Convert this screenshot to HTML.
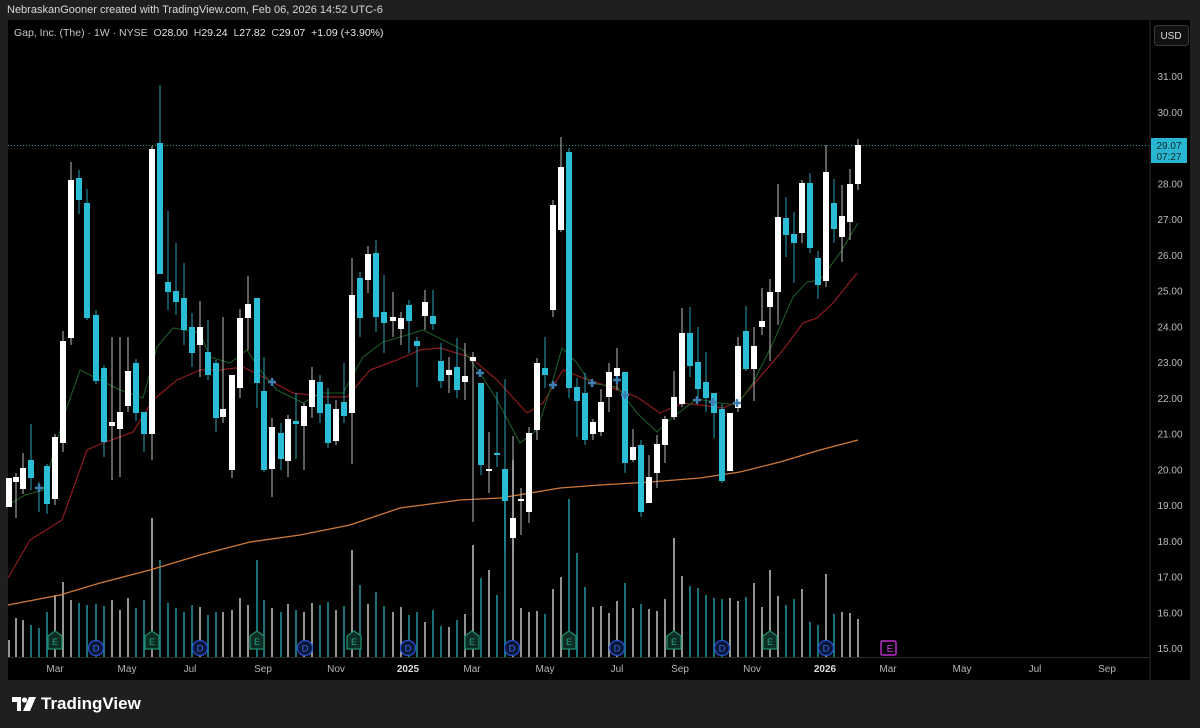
<!DOCTYPE html>
<html><head><meta charset="utf-8">
<style>
html,body{margin:0;padding:0;background:#1f1f1f;width:1200px;height:728px;overflow:hidden;font-family:"Liberation Sans",sans-serif}
#wrap{position:relative;width:1200px;height:728px}
.top{position:absolute;left:7px;top:4px;font-size:11px;color:#d8d8d8}
#chart{position:absolute;left:8px;top:20px;width:1182px;height:660px;background:#000}
.hdr{position:absolute;left:14px;top:27px;font-size:10.5px;color:#c8c8c8;white-space:nowrap}
.hdr b{font-weight:normal;color:#e8e8e8}
.logo{position:absolute;left:12px;top:694px;display:flex;align-items:center;color:#fff;font-weight:bold;font-size:17px}
</style></head><body><div id="wrap">
<div class="top">NebraskanGooner created with TradingView.com, Feb 06, 2026 14:52 UTC-6</div>
<div id="chart"></div>
<svg id="sv" width="1200" height="728" style="position:absolute;left:0;top:0"></svg>
<div class="hdr">Gap, Inc. (The) · 1W · NYSE &nbsp;O<b>28.00</b> &nbsp;H<b>29.24</b> &nbsp;L<b>27.82</b> &nbsp;C<b>29.07</b> &nbsp;<b>+1.09 (+3.90%)</b></div>
<div class="logo"><svg width="24" height="14" viewBox="0 0 24 14" style="margin-right:5px"><path d="M0 0h9v14h-4v-9h-5z" fill="#fff"/><circle cx="12.5" cy="3" r="2.6" fill="#fff"/><path d="M17 0h7l-6 14h-7z" fill="#fff"/></svg>TradingView</div>
</div>
<script>
var C=[
[9,478,507,478,507,'w'],[16,477,482,473,518,'w'],[23,468,489,453,494,'w'],[31,460,478,424,490,'c'],[39,487,489,482,512,'c'],[47,466,504,464,514,'c'],[55,437,499,434,505,'w'],[63,341,443,331,452,'w'],[71,180,338,162,345,'w'],[79,178,200,170,214,'c'],[87,203,318,189,320,'c'],[96,315,381,310,384,'c'],[104,368,442,365,457,'c'],[112,422,426,337,480,'w'],[120,412,429,337,477,'w'],[128,371,406,337,412,'w'],[136,363,413,359,421,'c'],[144,412,434,412,452,'c'],[152,149,434,146,460,'w'],[160,143,274,85,274,'c'],[168,282,292,211,310,'c'],[176,291,302,243,315,'c'],[184,298,330,263,345,'c'],[192,327,353,313,367,'c'],[200,327,345,301,377,'w'],[208,352,375,320,380,'c'],[216,363,418,360,432,'c'],
[223,409,417,317,423,'w'],[232,375,470,375,478,'w'],[240,318,388,309,398,'w'],[248,304,318,276,350,'w'],[257,298,383,298,408,'c'],[264,391,470,357,472,'c'],[272,427,469,418,497,'w'],[281,433,459,423,470,'c'],[288,419,461,415,477,'w'],[296,421,424,393,459,'c'],[304,406,426,403,470,'w'],[312,380,407,367,418,'w'],[320,382,413,375,423,'c'],[328,404,443,388,448,'c'],[336,409,441,400,445,'w'],[344,402,416,363,423,'c'],[352,295,413,258,464,'w'],[360,278,318,272,337,'c'],[368,254,280,246,293,'w'],[376,253,317,240,332,'c'],[384,312,323,275,353,'c'],[393,317,321,292,337,'w'],[401,318,329,312,345,'w'],[409,305,321,300,353,'c'],[417,341,346,337,387,'c'],[425,302,316,290,330,'w'],[433,316,324,290,330,'c'],
[441,361,381,343,388,'c'],[449,370,375,357,393,'w'],[457,367,390,338,398,'c'],[465,376,382,343,400,'w'],[473,357,361,352,522,'w'],[481,383,465,383,475,'c'],[489,469,471,432,493,'w'],[497,453,455,392,467,'c'],[505,469,501,379,550,'c'],[513,518,538,436,550,'w'],[521,499,501,488,535,'w'],[529,433,512,427,523,'w'],[537,363,430,358,440,'w'],[545,368,375,337,388,'c'],[553,205,310,200,317,'w'],[561,167,230,137,232,'w'],[569,152,388,148,398,'c'],[577,387,401,378,437,'c'],[585,393,440,373,445,'c'],[593,422,434,419,440,'w'],[601,402,432,389,436,'w'],[609,372,397,363,412,'w'],[617,368,376,348,390,'w'],[625,372,463,372,473,'c'],[633,447,460,429,462,'w'],[641,445,512,440,517,'c'],[649,477,503,455,503,'w'],
[657,444,473,435,488,'w'],[665,419,445,416,463,'w'],[674,397,417,371,420,'w'],[682,333,404,308,407,'w'],[690,333,366,307,377,'c'],[698,362,389,327,398,'c'],[706,382,398,352,412,'c'],[714,393,413,393,438,'c'],[722,409,481,404,483,'c'],[730,413,471,413,471,'w'],[738,346,408,337,412,'w'],[746,331,369,306,371,'c'],[754,346,369,327,401,'w'],[762,321,327,288,335,'w'],[770,292,307,279,361,'w'],[778,217,292,184,325,'w'],[786,218,235,197,257,'c'],[794,234,243,212,283,'c'],[802,183,233,180,243,'w'],[810,183,248,173,253,'c'],[818,258,285,251,299,'c'],[826,172,281,145,287,'w'],[834,203,229,179,243,'c'],[842,216,237,185,262,'w'],[850,184,222,169,240,'w'],[858,145,184,139,190,'w']];
var V={441:626,449:627,457:620,465:614,473:545,481:578,489:570,497:595,505:470,513:460,521:608,529:612,537:611,545:614,553:589,561:577,569:499,577:553,585:587,593:607,601:606,609:613,617:601,625:583,633:608,641:604,649:609,657:611,665:599,674:538,682:576,690:586,698:588,706:595,714:598,722:599,730:598,738:601,746:597,754:583,762:607,770:570,778:596,786:605,794:599,802:589,810:622,818:625,826:574,834:614,842:612,850:613,858:619,
9:640,16:618,23:620,31:625,39:628,47:612,55:595,63:582,71:600,79:603,87:605,96:604,104:606,112:600,120:610,128:598,136:608,144:600,152:518,160:560,168:603,176:608,184:612,192:605,200:607,208:615,216:612,223:612,232:610,240:598,248:605,257:560,264:600,272:608,281:612,288:604,296:610,304:612,312:603,320:605,328:602,336:610,344:606,352:550,360:585,368:604,376:592,384:606,393:612,401:607,409:615,417:612,425:622,433:610};
var s='';
function L(pts,col,w){s+='<polyline fill="none" stroke="'+col+'" stroke-width="'+w+'" points="'+pts+'"/>';}
// grid line at price
s+='<line x1="8" y1="145.5" x2="1150" y2="145.5" stroke="#2d8f99" stroke-dasharray="1,2" stroke-width="1"/>';
// volume
C.forEach(function(c){var t=V[c[0]]||608;s+='<rect x="'+(c[0]-0.8)+'" y="'+t+'" width="1.6" height="'+(657-t)+'" fill="'+(c[5]=='w'?'#b8b8b8':'#1f8d99')+'"/>';});
// MAs
L('8,605 60,595 100,583 150,570 200,555 250,542 300,535 350,525 400,508 460,500 500,498 560,488 600,485 650,482 700,478 740,472 780,462 820,450 858,440','#d07a3a',1.3);
L('8,578 30,540 62,520 87,450 103,443 133,432 153,400 177,380 200,370 220,370 243,367 263,377 293,393 327,397 347,397 370,370 397,360 420,350 440,348 470,357 497,380 527,413 543,403 563,370 583,378 610,387 637,397 660,413 683,403 723,408 740,400 760,377 783,350 803,323 817,318 833,303 857,273','#8e1b20',1.2);
L('8,505 25,495 43,490 65,413 80,370 100,380 120,390 143,398 157,347 173,328 200,333 210,357 230,363 247,350 260,370 277,390 303,403 320,393 343,393 363,357 383,342 407,335 423,330 437,337 463,350 480,373 497,400 520,443 537,430 550,390 562,348 577,363 590,383 617,387 637,413 657,432 673,417 697,399 720,403 737,405 753,383 773,343 793,297 807,282 820,280 840,253 858,223','#1d5a26',1.1);
// candles
C.forEach(function(c){var col=c[5]=='w'?'#ffffff':'#2bbcd6';var wc=c[5]=='w'?'#bdbdbd':'#2a9fb3';
s+='<line x1="'+c[0]+'" y1="'+c[3]+'" x2="'+c[0]+'" y2="'+c[4]+'" stroke="'+wc+'" stroke-width="1"/>';
var h=Math.max(2,c[2]-c[1]);s+='<rect x="'+(c[0]-3)+'" y="'+c[1]+'" width="6" height="'+h+'" fill="'+col+'"/>';});
// plus markers
[[39,488],[272,382],[480,373],[553,385],[592,383],[617,380],[625,395],[697,400],[713,402],[737,403]].forEach(function(p){s+='<path d="M'+(p[0]-4)+' '+p[1]+'h8M'+p[0]+' '+(p[1]-4)+'v8" stroke="#3d7fb0" stroke-width="2.5"/>';});
// events
[55,152,257,354,472,569,674,770].forEach(function(x){s+='<path d="M'+(x-7)+' 636 L'+x+' 631 L'+(x+7)+' 636 V649 H'+(x-7)+'Z" fill="#0c2d24" stroke="#1f8a6a" stroke-width="1.3"/><text x="'+x+'" y="645" fill="#2aa07c" font-size="9" text-anchor="middle" font-family="Liberation Sans">E</text>';});
[96,200,305,408,512,617,722,826].forEach(function(x){s+='<circle cx="'+x+'" cy="648" r="7.5" fill="#0a1638" stroke="#2a55d0" stroke-width="1.3"/><text x="'+x+'" y="651.5" fill="#3d6ae0" font-size="9.5" text-anchor="middle" font-family="Liberation Sans">D</text>';});
s+='<rect x="881" y="641" width="15" height="14" rx="1.5" fill="none" stroke="#c02ed0" stroke-width="1.4"/><text x="890" y="652" fill="#d040e0" font-size="10" text-anchor="middle" font-family="Liberation Sans">E</text>';
// axes
s+='<line x1="1150" y1="20" x2="1150" y2="680" stroke="#2a2a2a"/><line x1="8" y1="657.5" x2="1150" y2="657.5" stroke="#2a2a2a"/>';
for(var p=15;p<=31;p++){var y=148-(p-29)*35.75;if(p==29)continue;s+='<text x="1170" y="'+(y+3.5)+'" fill="#bdbdbd" font-size="10" text-anchor="middle" font-family="Liberation Sans">'+p+'.00</text>';}
s+='<rect x="1151" y="138" width="36" height="25" fill="#29b6d0"/><text x="1169" y="149" fill="#0a2a30" font-size="10" text-anchor="middle" font-family="Liberation Sans">29.07</text><text x="1169" y="160" fill="#0a2a30" font-size="10" text-anchor="middle" font-family="Liberation Sans">07:27</text>';
s+='<rect x="1154.5" y="25.5" width="34" height="20" rx="3" fill="#111" stroke="#3a3a3a"/><text x="1171" y="39" fill="#ddd" font-size="10" text-anchor="middle" font-family="Liberation Sans">USD</text>';
[['Mar',55],['May',127],['Jul',190],['Sep',263],['Nov',336],['2025',408,1],['Mar',472],['May',545],['Jul',617],['Sep',680],['Nov',752],['2026',825,1],['Mar',888],['May',962],['Jul',1035],['Sep',1107]].forEach(function(t){s+='<text x="'+t[1]+'" y="672" fill="'+(t[2]?'#dcdcdc':'#b5b5b5')+'" font-size="10" '+(t[2]?'font-weight="bold" ':'')+'text-anchor="middle" font-family="Liberation Sans">'+t[0]+'</text>';});
document.getElementById('sv').innerHTML=s;
</script>
</body></html>
